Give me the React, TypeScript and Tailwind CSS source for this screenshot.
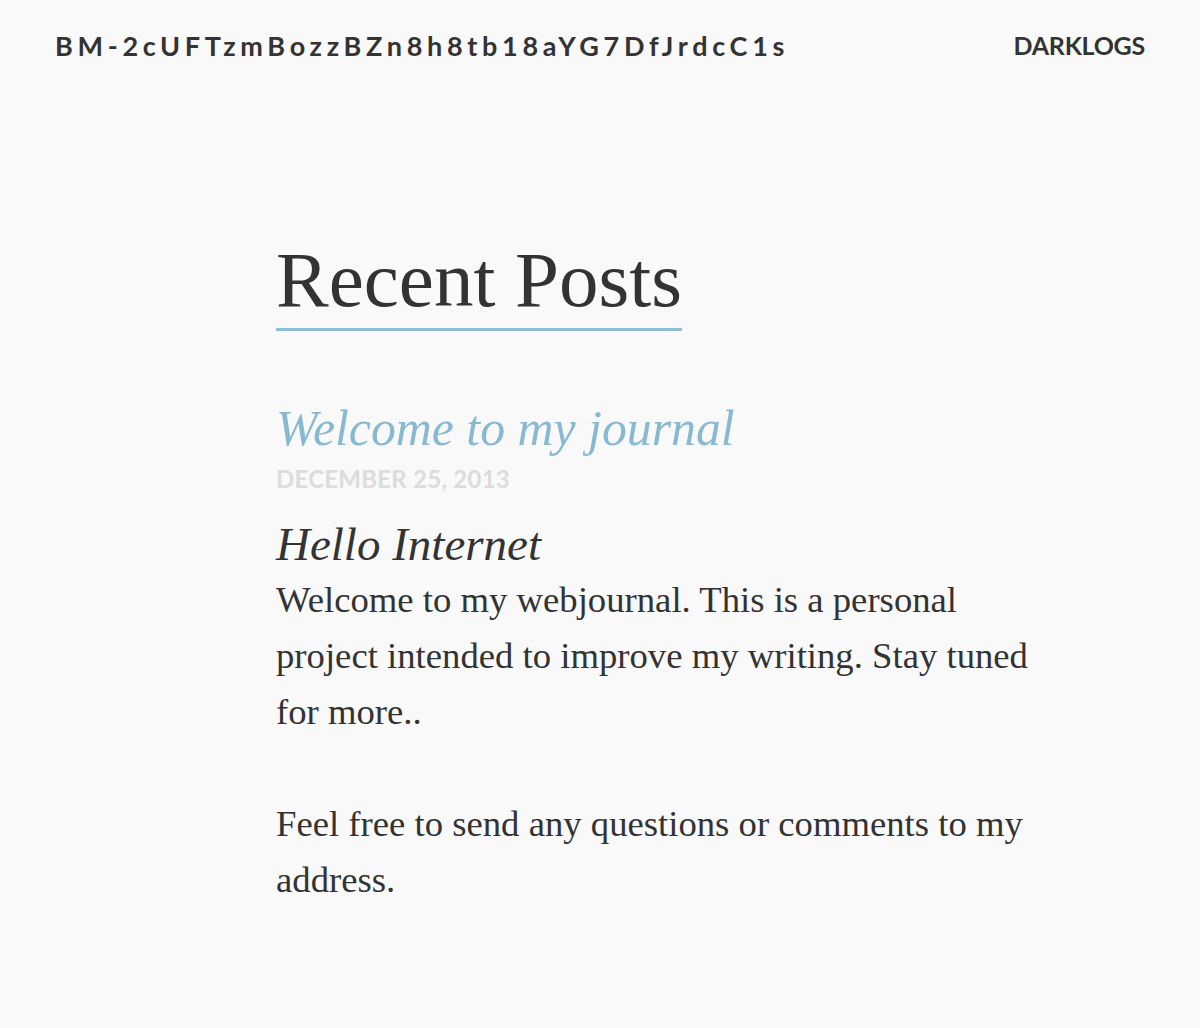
import React from "react";

const serif = "font-['Liberation_Serif',serif]";
const sans = "font-['Lato','Noto_Sans',sans-serif]";

const Header = () => {
  return (
    <header className="flex flex-row items-start justify-between px-[55px] pt-[33px]">
      <a
        href="#"
        className={`${sans} text-[27px] font-bold leading-[25px] tracking-[0.174em] text-[#333]`}
      >
        BM-2cUFTzmBozzBZn8h8tb18aYG7DfJrdcC1s
      </a>
      <a
        href="#"
        className={`${sans} text-[25px] font-bold leading-[25px] tracking-[-0.01em] text-[#333]`}
      >
        DARKLOGS
      </a>
    </header>
  );
};

const Post = () => {
  return (
    <article className="mt-[73px] flex flex-col">
      <a
        href="#"
        className={`${serif} text-[49.8px] italic leading-[49px] text-[#88b9d2]`}
      >
        Welcome to my journal
      </a>
      <span
        className={`${sans} mt-[14px] text-[24px] font-bold uppercase leading-[23px] tracking-[0.01em] text-[#dcdcdc]`}
      >
        December 25, 2013
      </span>
      <h3 className={`${serif} mt-[31px] text-[47px] italic leading-[47px] text-[#333]`}>
        Hello Internet
      </h3>
      <div className={`${serif} mt-[4px] text-[36.7px] leading-[56px] text-[#333]`}>
        <p>
          Welcome to my webjournal. This is a personal project intended to
          improve my writing. Stay tuned for more..
        </p>
        <p className="mt-[56px]">
          Feel free to send any questions or comments to my address.
        </p>
      </div>
    </article>
  );
};

export default function App() {
  return (
    <div className="min-h-[1028px] w-full bg-[#f9f9f9]">
      <Header />
      <main className="ml-[276px] mt-[182px] flex w-[770px] flex-col items-start">
        <h1
          className={`${serif} border-b-[3px] border-[#8ebfd6] pb-[9px] text-[79px] leading-[79px] text-[#333]`}
        >
          Recent Posts
        </h1>
        <Post />
      </main>
    </div>
  );
}
